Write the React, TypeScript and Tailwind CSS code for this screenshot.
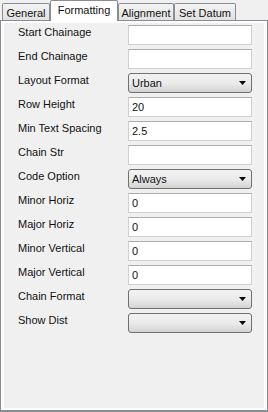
const tabs = [
  { label: "General", width: "w-[48px]", active: false },
  { label: "Formatting", width: "w-[68px]", active: true },
  { label: "Alignment", width: "w-[56px]", active: false },
  { label: "Set Datum", width: "w-[62px]", active: false },
];

type Row = { label: string; kind: "text" | "select"; value?: string };

const rows: Row[] = [
  { label: "Start Chainage", kind: "text" },
  { label: "End Chainage", kind: "text" },
  { label: "Layout Format", kind: "select", value: "Urban" },
  { label: "Row Height", kind: "text", value: "20" },
  { label: "Min Text Spacing", kind: "text", value: "2.5" },
  { label: "Chain Str", kind: "text" },
  { label: "Code Option", kind: "select", value: "Always" },
  { label: "Minor Horiz", kind: "text", value: "0" },
  { label: "Major Horiz", kind: "text", value: "0" },
  { label: "Minor Vertical", kind: "text", value: "0" },
  { label: "Major Vertical", kind: "text", value: "0" },
  { label: "Chain Format", kind: "select" },
  { label: "Show Dist", kind: "select" },
];

const Tab = ({ label, width, active }: { label: string; width: string; active: boolean }) =>
  active ? (
    <div
      className={`${width} relative z-10 -mb-px h-[21px] border-x border-t border-[#898c95] bg-white pt-[3px] text-center leading-[13px] rounded-t-[2px]`}
    >
      {label}
    </div>
  ) : (
    <div
      className={`${width} h-[17px] border-x border-t border-[#898c95] bg-gradient-to-b from-[#f3f3f3] to-[#e2e2e2] pt-[3px] text-center leading-[13px] rounded-t-[2px]`}
    >
      {label}
    </div>
  );

const TextBox = ({ value }: { value?: string }) => (
  <div className="flex h-5 w-[124px] items-center border border-[#cdd0d6] border-t-[#abadb3] bg-white pl-[3px] leading-[13px]">
    {value}
  </div>
);

const Combo = ({ value }: { value?: string }) => (
  <div className="flex h-5 w-[124px] items-center justify-between rounded-[3px] border border-[#707070] bg-gradient-to-b from-[#f2f2f2] via-[#ebebeb] to-[#d4d4d4] pl-[3px] pr-[5px] leading-[13px]">
    <span>{value}</span>
    <svg width="7" height="4" viewBox="0 0 7 4">
      <path d="M0 0h7L3.5 4z" fill="#000" />
    </svg>
  </div>
);

export default function App() {
  return (
    <div className="flex h-[412px] w-[268px] flex-col bg-[#f0f0f0] font-['Liberation_Sans',Arial,sans-serif] text-[11px] text-[#111]">
      {/* tab strip */}
      <div className="flex h-5 items-end pl-[2px]">
        {tabs.map((t) => (
          <Tab key={t.label} {...t} />
        ))}
      </div>

      {/* page */}
      <div className="flex flex-1 border border-b-2 border-[#898c95] bg-white px-[3px] py-[2px]">
        <div className="flex flex-1 flex-col gap-1 bg-[#f0f0f0] pt-[2px]">
          {rows.map((r) => (
            <div key={r.label} className="flex h-5 items-start">
              <div className="mt-px w-[124px] pl-[14px] leading-[13px]">{r.label}</div>
              {r.kind === "text" ? <TextBox value={r.value} /> : <Combo value={r.value} />}
            </div>
          ))}
        </div>
      </div>
    </div>
  );
}
